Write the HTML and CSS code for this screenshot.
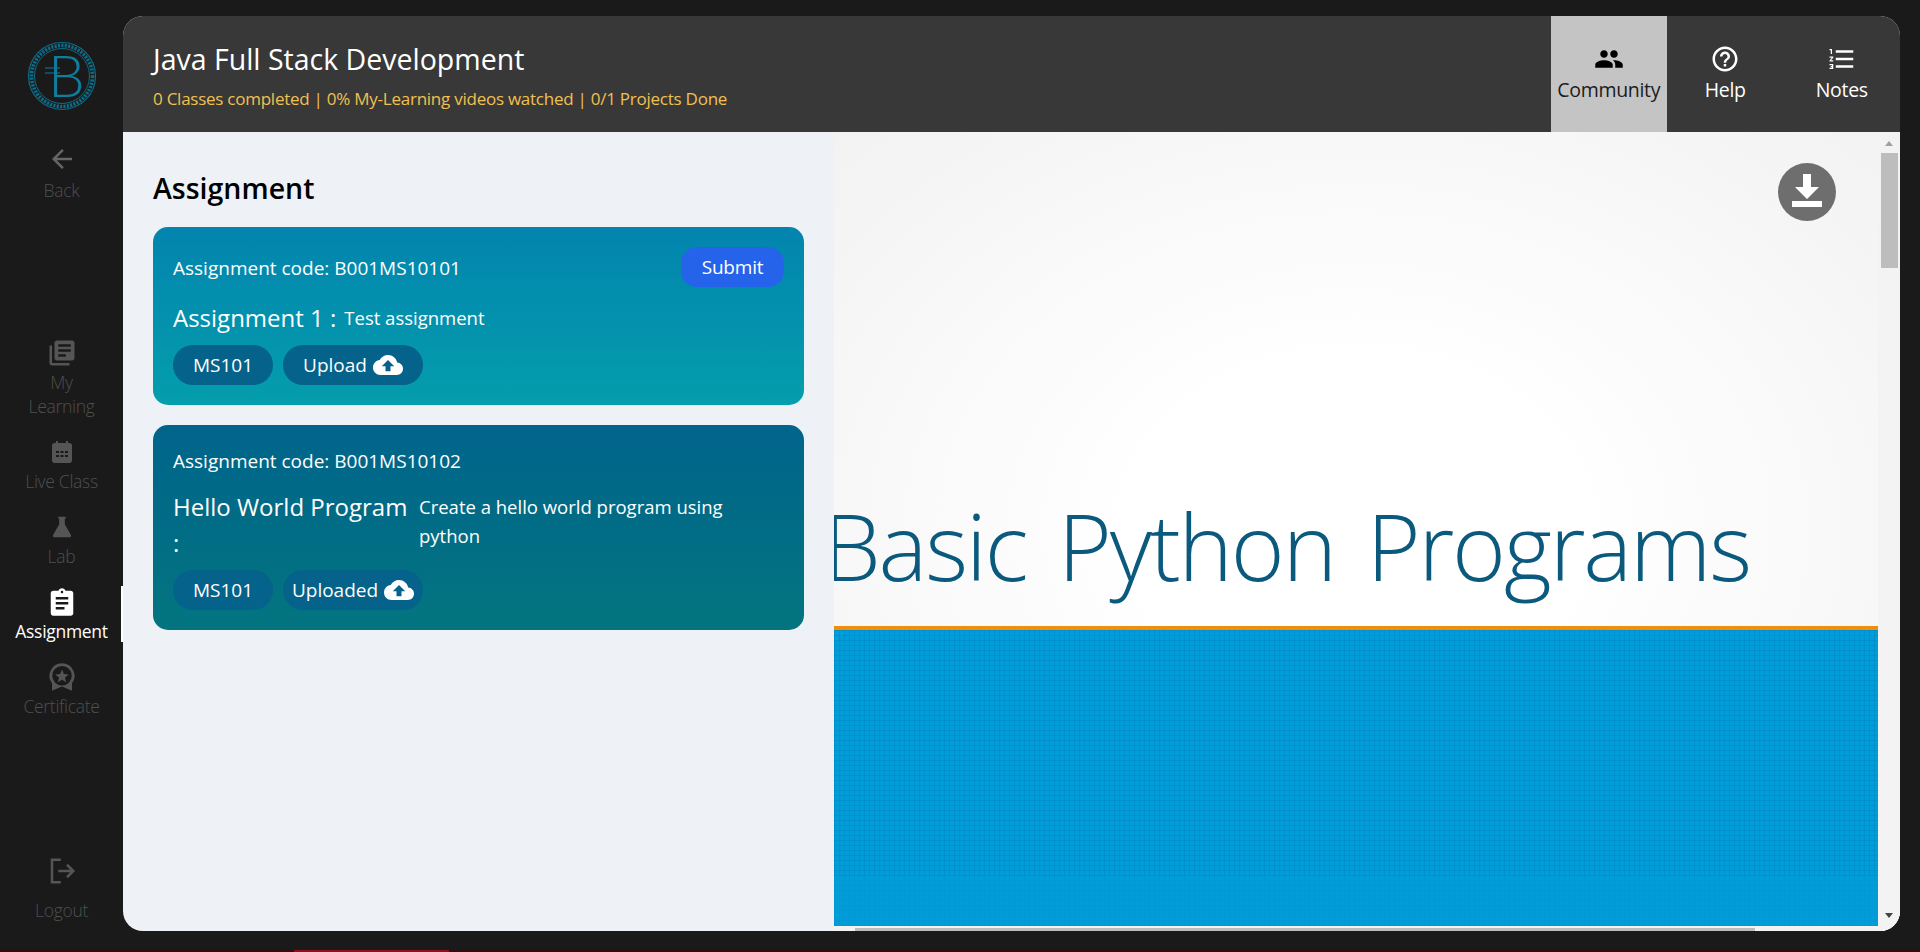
FILE: index.html
```html
<!DOCTYPE html>
<html lang="en">
<head>
  <meta charset="UTF-8">
  <title>Assignment</title>
  <link rel="stylesheet" href="styles.css">
</head>
<body>

<div class="app">
  <aside class="sidebar">
    <svg class="logo" viewBox="0 0 70 70">
      <circle cx="35" cy="35" r="33.5" fill="none" stroke="#0d6c88" stroke-width="1.2"/>
      <circle cx="35" cy="35" r="30.5" fill="none" stroke="#0d6c88" stroke-width="3.6" stroke-dasharray="2.2 1.2"/>
      <circle cx="35" cy="35" r="27.5" fill="none" stroke="#0d6c88" stroke-width="1"/>
      <text x="21" y="56" class="logo-letter">B</text>
      <path d="M18 27h15M18 32h15" stroke="#0f7d9c" stroke-width="1.2"/>
    </svg>

    <a class="side-item back-item">
      <svg class="side-icon" viewBox="0 0 24 24"><path d="M20 11H7.830l5.590-5.590L12 4l-8 8 8 8 1.410-1.410L7.830 13H20v-2z"/></svg>
      <span>Back</span>
    </a>

    <nav class="side-nav">
      <a class="side-item">
        <svg class="side-icon" viewBox="0 0 24 24"><path d="M4 6H2v14c0 1.100.9 2 2 2h14v-2H4V6zm16-4H8c-1.100 0-2 .9-2 2v12c0 1.100.9 2 2 2h12c1.100 0 2-.9 2-2V4c0-1.100-.9-2-2-2zm-1 9H9V9h10v2zm-4 4H9v-2h6v2zm4-8H9V5h10v2z"/></svg>
        <span>My<br>Learning</span>
      </a>
      <a class="side-item">
        <svg class="side-icon" viewBox="-3 -3 30 30"><path fill-rule="evenodd" d="M6 1h2v2h8V1h2v2h1.500C20.900 3 22 4.100 22 5.500v15c0 1.400-1.100 2.500-2.500 2.500h-15C3.100 23 2 21.900 2 20.500v-15C2 4.100 3.100 3 4.500 3H6V1zM6 11v2h3v-2H6zm4.500 0v2h3v-2h-3zm4.500 0v2h3v-2h-3zM6 15v2h3v-2H6zm4.500 0v2h3v-2h-3zm4.500 0v2h3v-2h-3z"/></svg>
        <span>Live Class</span>
      </a>
      <a class="side-item">
        <svg class="side-icon" viewBox="-4 -4 32 32"><path d="M8 1h8v2h-1v6l6.500 11.500c.6 1.200-.2 2.500-1.500 2.500H4c-1.300 0-2.100-1.300-1.500-2.500L9 9V3H8V1z"/></svg>
        <span>Lab</span>
      </a>
      <a class="side-item active">
        <svg class="side-icon" viewBox="0 0 24 24"><path d="M19 3h-4.180C14.400 1.840 13.300 1 12 1c-1.300 0-2.400.84-2.820 2H5c-1.100 0-2 .9-2 2v16c0 1.100.9 2 2 2h14c1.100 0 2-.9 2-2V5c0-1.100-.9-2-2-2zm-7 0c.55 0 1 .45 1 1s-.45 1-1 1-1-.45-1-1 .45-1 1-1zm2 15H7v-2h7v2zm3-4H7v-2h10v2zm0-4H7V8h10v2z"/></svg>
        <span>Assignment</span>
      </a>
      <a class="side-item">
        <svg class="side-icon" viewBox="0 0 24 24"><path fill-rule="evenodd" d="M12 1a10 10 0 0 1 8 16v6l-8-3.500L4 23v-6A10 10 0 0 1 12 1zm0 2.200a7.800 7.800 0 1 0 0 15.600 7.800 7.800 0 0 0 0-15.600zm0 2.800 1.500 3.600 3.900.3-3 2.500.9 3.800-3.300-2-3.300 2 .9-3.800-3-2.500 3.900-.3z"/></svg>
        <span>Certificate</span>
      </a>
    </nav>

    <a class="side-item logout-item">
      <svg class="side-icon" viewBox="0 0 24 24"><path d="M11 3H4v18h7" fill="none" stroke="#555" stroke-width="2"/><path d="M9 12h12M16 7l5 5-5 5" fill="none" stroke="#555" stroke-width="2"/></svg>
      <span>Logout</span>
    </a>
  </aside>

  <main class="panel">
    <header class="topbar">
      <div class="course">
        <h1>Java Full Stack Development</h1>
        <p>0 Classes completed | 0% My-Learning videos watched | 0/1 Projects Done</p>
      </div>
      <div class="tabs">
        <a class="tab active">
          <svg viewBox="0 0 24 24"><path d="M16 11c1.660 0 2.990-1.340 2.990-3S17.660 5 16 5c-1.660 0-3 1.340-3 3s1.340 3 3 3zm-8 0c1.660 0 2.990-1.340 2.990-3S9.660 5 8 5C6.340 5 5 6.340 5 8s1.340 3 3 3zm0 2c-2.330 0-7 1.170-7 3.500V19h14v-2.500c0-2.330-4.670-3.500-7-3.500zm8 0c-.29 0-.62.02-.97.05 1.160.84 1.970 1.970 1.970 3.450V19h6v-2.500c0-2.330-4.670-3.500-7-3.500z"/></svg>
          <span>Community</span>
        </a>
        <a class="tab">
          <svg viewBox="0 0 24 24"><path d="M11 18h2v-2h-2v2zm1-16C6.480 2 2 6.480 2 12s4.480 10 10 10 10-4.480 10-10S17.520 2 12 2zm0 18c-4.410 0-8-3.590-8-8s3.590-8 8-8 8 3.590 8 8-3.590 8-8 8zm0-14c-2.210 0-4 1.790-4 4h2c0-1.100.9-2 2-2s2 .9 2 2c0 2-3 1.750-3 5h2c0-2.250 3-2.500 3-5 0-2.210-1.790-4-4-4z"/></svg>
          <span>Help</span>
        </a>
        <a class="tab">
          <svg viewBox="0 0 24 24"><path d="M2 17h2v.5H3v1h1v.5H2v1h3v-4H2v1zm1-9h1V4H2v1h1v3zm-1 3h1.800L2 13.100v.9h3v-1H3.200L5 10.900V10H2v1zm5-6v2h14V5H7zm0 14h14v-2H7v2zm0-6h14v-2H7v2z"/></svg>
          <span>Notes</span>
        </a>
      </div>
    </header>

    <div class="content">
      <section class="assignments">
        <h2>Assignment</h2>

        <div class="card card-open">
          <div class="card-head">
            <span class="code">Assignment code: B001MS10101</span>
            <button class="submit-btn">Submit</button>
          </div>
          <div class="card-title">
            <span class="title-name">Assignment 1 :</span>
            <span class="title-desc">Test assignment</span>
          </div>
          <div class="pills">
            <span class="pill">MS101</span>
            <span class="pill pill-upload">Upload
              <svg viewBox="0 0 24 24"><path d="M19.350 10.040C18.670 6.590 15.640 4 12 4 9.110 4 6.600 5.640 5.350 8.040 2.340 8.360 0 10.910 0 14c0 3.310 2.690 6 6 6h13c2.760 0 5-2.240 5-5 0-2.640-2.050-4.780-4.650-4.960zM14 13v4h-4v-4H7l5-5 5 5h-3z"/></svg>
            </span>
          </div>
        </div>

        <div class="card card-done">
          <div class="card-head">
            <span class="code">Assignment code: B001MS10102</span>
          </div>
          <div class="card-title">
            <span class="title-name">Hello World Program :</span>
            <span class="title-desc">Create a hello world program using python</span>
          </div>
          <div class="pills">
            <span class="pill">MS101</span>
            <span class="pill pill-upload">Uploaded
              <svg viewBox="0 0 24 24"><path d="M19.350 10.040C18.670 6.590 15.640 4 12 4 9.110 4 6.600 5.640 5.350 8.040 2.340 8.360 0 10.910 0 14c0 3.310 2.690 6 6 6h13c2.760 0 5-2.240 5-5 0-2.640-2.050-4.780-4.650-4.960zM14 13v4h-4v-4H7l5-5 5 5h-3z"/></svg>
            </span>
          </div>
        </div>
      </section>

      <section class="viewer">
        <div class="slide">
          <div class="slide-top">
            <span class="slide-title">Basic Python Programs</span>
          </div>
          <div class="slide-bottom"></div>
          <button class="download-btn">
            <svg viewBox="0 0 58 58"><path d="M25 11h8v13h8L29 36 17 24h8zM14 38h30v6H14z"/></svg>
          </button>
        </div>
        <div class="v-scroll">
          <span class="arrow-up"></span>
          <span class="v-thumb"></span>
          <span class="arrow-down"></span>
        </div>
        <div class="h-scroll"><span class="h-thumb"></span></div>
      </section>
    </div>
  </main>
</div>

<div class="taskbar-strip"><span class="strip-tab"></span></div>

</body>
</html>
```

FILE: styles.css
```css
* {
  margin: 0;
  padding: 0;
  box-sizing: border-box;
}
body {
  width: 1920px;
  height: 952px;
  overflow: hidden;
  background: #1a1a1a;
  font-family: 'Open Sans', 'Noto Sans', sans-serif;
  color: #fff;
}
.app {
  display: flex;
  height: 950px;
}

/* left rail */
.sidebar {
  width: 123px;
  flex: none;
  display: flex;
  flex-direction: column;
  align-items: center;
}
.logo {
  width: 70px;
  height: 70px;
  margin-top: 41px;
}
.logo-letter {
  font-family: 'Lato', sans-serif;
  font-weight: 300;
  font-size: 58px;
  fill: #0f7d9c;
}
.side-item {
  width: 100%;
  display: flex;
  flex-direction: column;
  align-items: center;
  text-align: center;
  gap: 2px;
  font-size: 17.5px;
  font-weight: 300;
  line-height: 24px;
  letter-spacing: -0.3px;
  color: #4f4f4f;
  position: relative;
}
.side-icon {
  width: 30px;
  height: 30px;
  flex: none;
  fill: #555;
}
.back-item {
  margin-top: 33px;
  gap: 4px;
}
.back-item .side-icon {
  fill: #666;
}
.side-nav {
  display: flex;
  flex-direction: column;
  gap: 19px;
  width: 100%;
  margin-top: 136px;
}
.side-item.active {
  color: #fff;
  font-weight: 400;
}
.side-item.active .side-icon {
  fill: #fff;
}
.side-item.active::after {
  content: "";
  position: absolute;
  right: 0;
  top: -1px;
  width: 2px;
  height: 56px;
  background: #fff;
}
.logout-item {
  margin-top: auto;
  margin-bottom: 28px;
  gap: 12px;
}

/* main panel */
.panel {
  width: 1777px;
  height: 915px;
  margin-top: 16px;
  border-radius: 20px;
  overflow: hidden;
  display: flex;
  flex-direction: column;
  background: #eef1f6;
}
.topbar {
  height: 116px;
  flex: none;
  display: flex;
  justify-content: space-between;
  background: #383838;
}
.course {
  padding: 24px 0 0 30px;
}
.course h1 {
  font-size: 28.5px;
  font-weight: 400;
  line-height: 38px;
}
.course p {
  margin-top: 9px;
  font-size: 17px;
  line-height: 24px;
  letter-spacing: -0.25px;
  color: #f0c050;
}
.tabs {
  display: flex;
}
.tab {
  width: 116.5px;
  display: flex;
  flex-direction: column;
  align-items: center;
  padding-top: 28px;
  font-size: 19.5px;
  line-height: 26px;
  letter-spacing: -0.3px;
  gap: 3px;
}
.tab svg {
  width: 30px;
  height: 30px;
  fill: #fff;
}
.tab.active {
  background: #c4c4c4;
  color: #1c1c1c;
}
.tab.active svg {
  fill: #000;
}

.content {
  flex: 1;
  display: flex;
  min-height: 0;
}
.assignments {
  width: 711px;
  flex: none;
  padding: 0 30px;
}
.assignments h2 {
  font-size: 28.5px;
  font-weight: 600;
  line-height: 38px;
  color: #000;
  margin: 37px 0 20px;
}
.card {
  border-radius: 15px;
  padding: 20px;
  margin-bottom: 20px;
  width: 651px;
}
.card-open {
  background: linear-gradient(180deg, #0284ae, #049eac);
}
.card-done {
  background: linear-gradient(180deg, #00648c, #03757f);
}
.card-head {
  display: flex;
  justify-content: space-between;
  align-items: center;
  min-height: 34px;
}
.code {
  font-size: 19px;
  line-height: 32px;
  padding-bottom: 2px;
}
.submit-btn {
  width: 103px;
  height: 40px;
  margin-bottom: 3px;
  border: none;
  border-radius: 16px;
  background: #2563eb;
  color: #fff;
  font-family: inherit;
  font-size: 19px;
  letter-spacing: -0.2px;
}
.card-title {
  display: flex;
  gap: 8px;
  margin-top: 10px;
}
.title-name {
  flex: none;
  max-width: 238px;
  font-size: 24px;
  line-height: 36px;
}
.title-desc {
  font-size: 18.5px;
  line-height: 29px;
  padding-top: 3px;
}
.pills {
  display: flex;
  gap: 10px;
  margin-top: 9px;
}
.pill {
  width: 100px;
  height: 40px;
  display: inline-flex;
  align-items: center;
  justify-content: center;
  border-radius: 20px;
  background: #05628a;
  font-size: 19px;
}
.pill-upload {
  width: 140px;
  gap: 6px;
}
.pill-upload svg {
  width: 30px;
  height: 30px;
  fill: #fff;
}

/* slide viewer */
.viewer {
  flex: 1;
  position: relative;
  background: #fff;
  overflow: hidden;
}
.slide {
  position: relative;
  width: 1044px;
  height: 794px;
  overflow: hidden;
}
.slide-top {
  height: 498px;
  display: flex;
  align-items: flex-end;
  border-bottom: 4px solid #ef8f0b;
  background: radial-gradient(ellipse at 50% 80%, #fff 30%, #f2f2f2 100%);
  overflow: hidden;
  white-space: nowrap;
}
.slide-title {
  margin: 0 0 20px -11px;
  font-family: 'Open Sans', sans-serif;
  font-weight: 300;
  font-size: 92px;
  line-height: 120px;
  letter-spacing: -2.1px;
  word-spacing: 10px;
  color: #0b5a7d;
}
.slide-bottom {
  height: 296px;
  background-color: #009dd9;
  background-image:
    linear-gradient(0deg, rgba(0, 157, 217, 0.7) 50px, transparent 50px),
    repeating-linear-gradient(90deg, rgba(0, 90, 170, 0.16) 0 1px, transparent 1px 5px),
    repeating-linear-gradient(0deg, rgba(0, 90, 170, 0.16) 0 1px, transparent 1px 5px);
}
.download-btn {
  position: absolute;
  top: 31px;
  right: 42px;
  width: 58px;
  height: 58px;
  border: none;
  border-radius: 50%;
  background: #6e6e6e;
}
.download-btn svg {
  display: block;
  width: 58px;
  height: 58px;
  fill: #fff;
}
.v-scroll {
  position: absolute;
  top: 0;
  right: 0;
  bottom: 0;
  width: 22px;
  background: #f3f3f3;
}
.v-thumb {
  position: absolute;
  top: 21px;
  left: 3px;
  width: 17px;
  height: 115px;
  background: #bdbdbd;
}
.arrow-up, .arrow-down {
  position: absolute;
  left: 7px;
  width: 0;
  height: 0;
  border-left: 4.5px solid transparent;
  border-right: 4.5px solid transparent;
}
.arrow-up {
  top: 9px;
  border-bottom: 5px solid #a0a0a0;
}
.arrow-down {
  bottom: 13px;
  border-top: 5px solid #444;
}
.h-scroll {
  position: absolute;
  left: 0;
  right: 22px;
  bottom: 0;
  height: 5px;
  background: #f3f3f3;
}
.h-thumb {
  position: absolute;
  left: 21px;
  bottom: 0;
  width: 900px;
  height: 3px;
  background: #bdbdbd;
}

.taskbar-strip {
  height: 2px;
  background: #3a0a10;
  padding-left: 294px;
}
.strip-tab {
  display: block;
  width: 155px;
  height: 2px;
  background: #8c1020;
}
```
